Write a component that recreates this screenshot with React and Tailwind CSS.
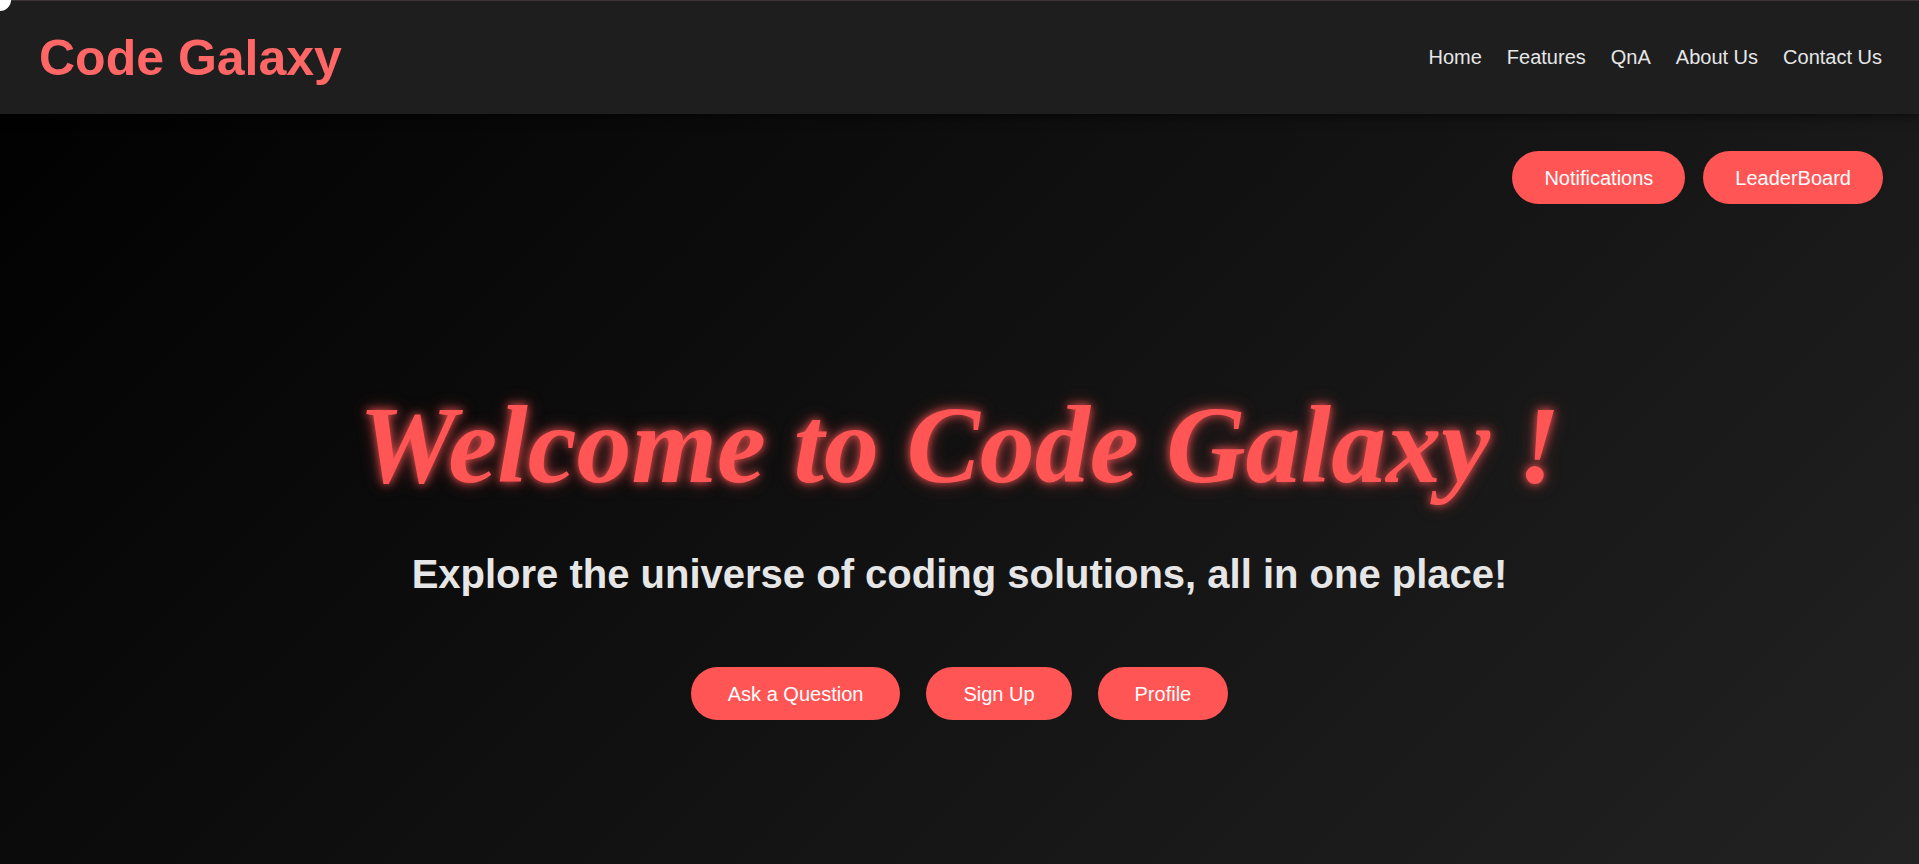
import React from "react";

export default function App() {
  const sans = { fontFamily: '"Liberation Sans", Arial, sans-serif' };
  return (
    <div
      className="relative min-h-screen w-full overflow-hidden bg-[linear-gradient(135deg,#000000_0%,#111111_50%,#222222_100%)]"
      style={sans}
    >
      <div className="absolute -left-[11px] -top-[11px] z-20 h-[22px] w-[22px] rounded-full bg-white" />
      <nav className="relative z-10 flex h-[114px] items-center justify-between border-t border-[#3f3437] bg-[#1e1e1e] pl-[39px] pr-[37px] shadow-[0_2px_10px_rgba(0,0,0,0.6)]">
        <div className="text-[50px] font-bold leading-none text-[#ff6666]">Code Galaxy</div>
        <ul className="-mt-[2px] flex items-center gap-[25px] text-[20px] text-[#e6e6e6]">
          <li>Home</li>
          <li>Features</li>
          <li>QnA</li>
          <li>About Us</li>
          <li>Contact Us</li>
        </ul>
      </nav>

      <div className="flex justify-end gap-[18px] pr-[36px] pt-[37px]">
        <button className="flex h-[53px] items-center rounded-full bg-[#ff5555] px-[32px] text-[20px] text-white">
          Notifications
        </button>
        <button className="flex h-[53px] items-center rounded-full bg-[#ff5555] px-[32px] text-[20px] text-white">
          LeaderBoard
        </button>
      </div>

      <div className="flex flex-col items-center">
        <h1
          className="mt-[186px] text-[110px] font-bold italic leading-none text-[#ff5555] [text-shadow:0_0_8px_rgba(255,85,85,0.9),0_0_18px_rgba(255,85,85,0.45)]"
          style={{ fontFamily: '"Liberation Serif", "Times New Roman", serif' }}
        >
          Welcome to Code Galaxy !
        </h1>
        <p className="mt-[54px] text-[40px] font-bold leading-none text-[#e6e6e6]">
          Explore the universe of coding solutions, all in one place!
        </p>
        <div className="mt-[73px] flex gap-[26px]">
          <button className="flex h-[53px] items-center rounded-full bg-[#ff5555] px-[37px] text-[20px] text-white">
            Ask a Question
          </button>
          <button className="flex h-[53px] items-center rounded-full bg-[#ff5555] px-[37px] text-[20px] text-white">
            Sign Up
          </button>
          <button className="flex h-[53px] items-center rounded-full bg-[#ff5555] px-[37px] text-[20px] text-white">
            Profile
          </button>
        </div>
      </div>
    </div>
  );
}
